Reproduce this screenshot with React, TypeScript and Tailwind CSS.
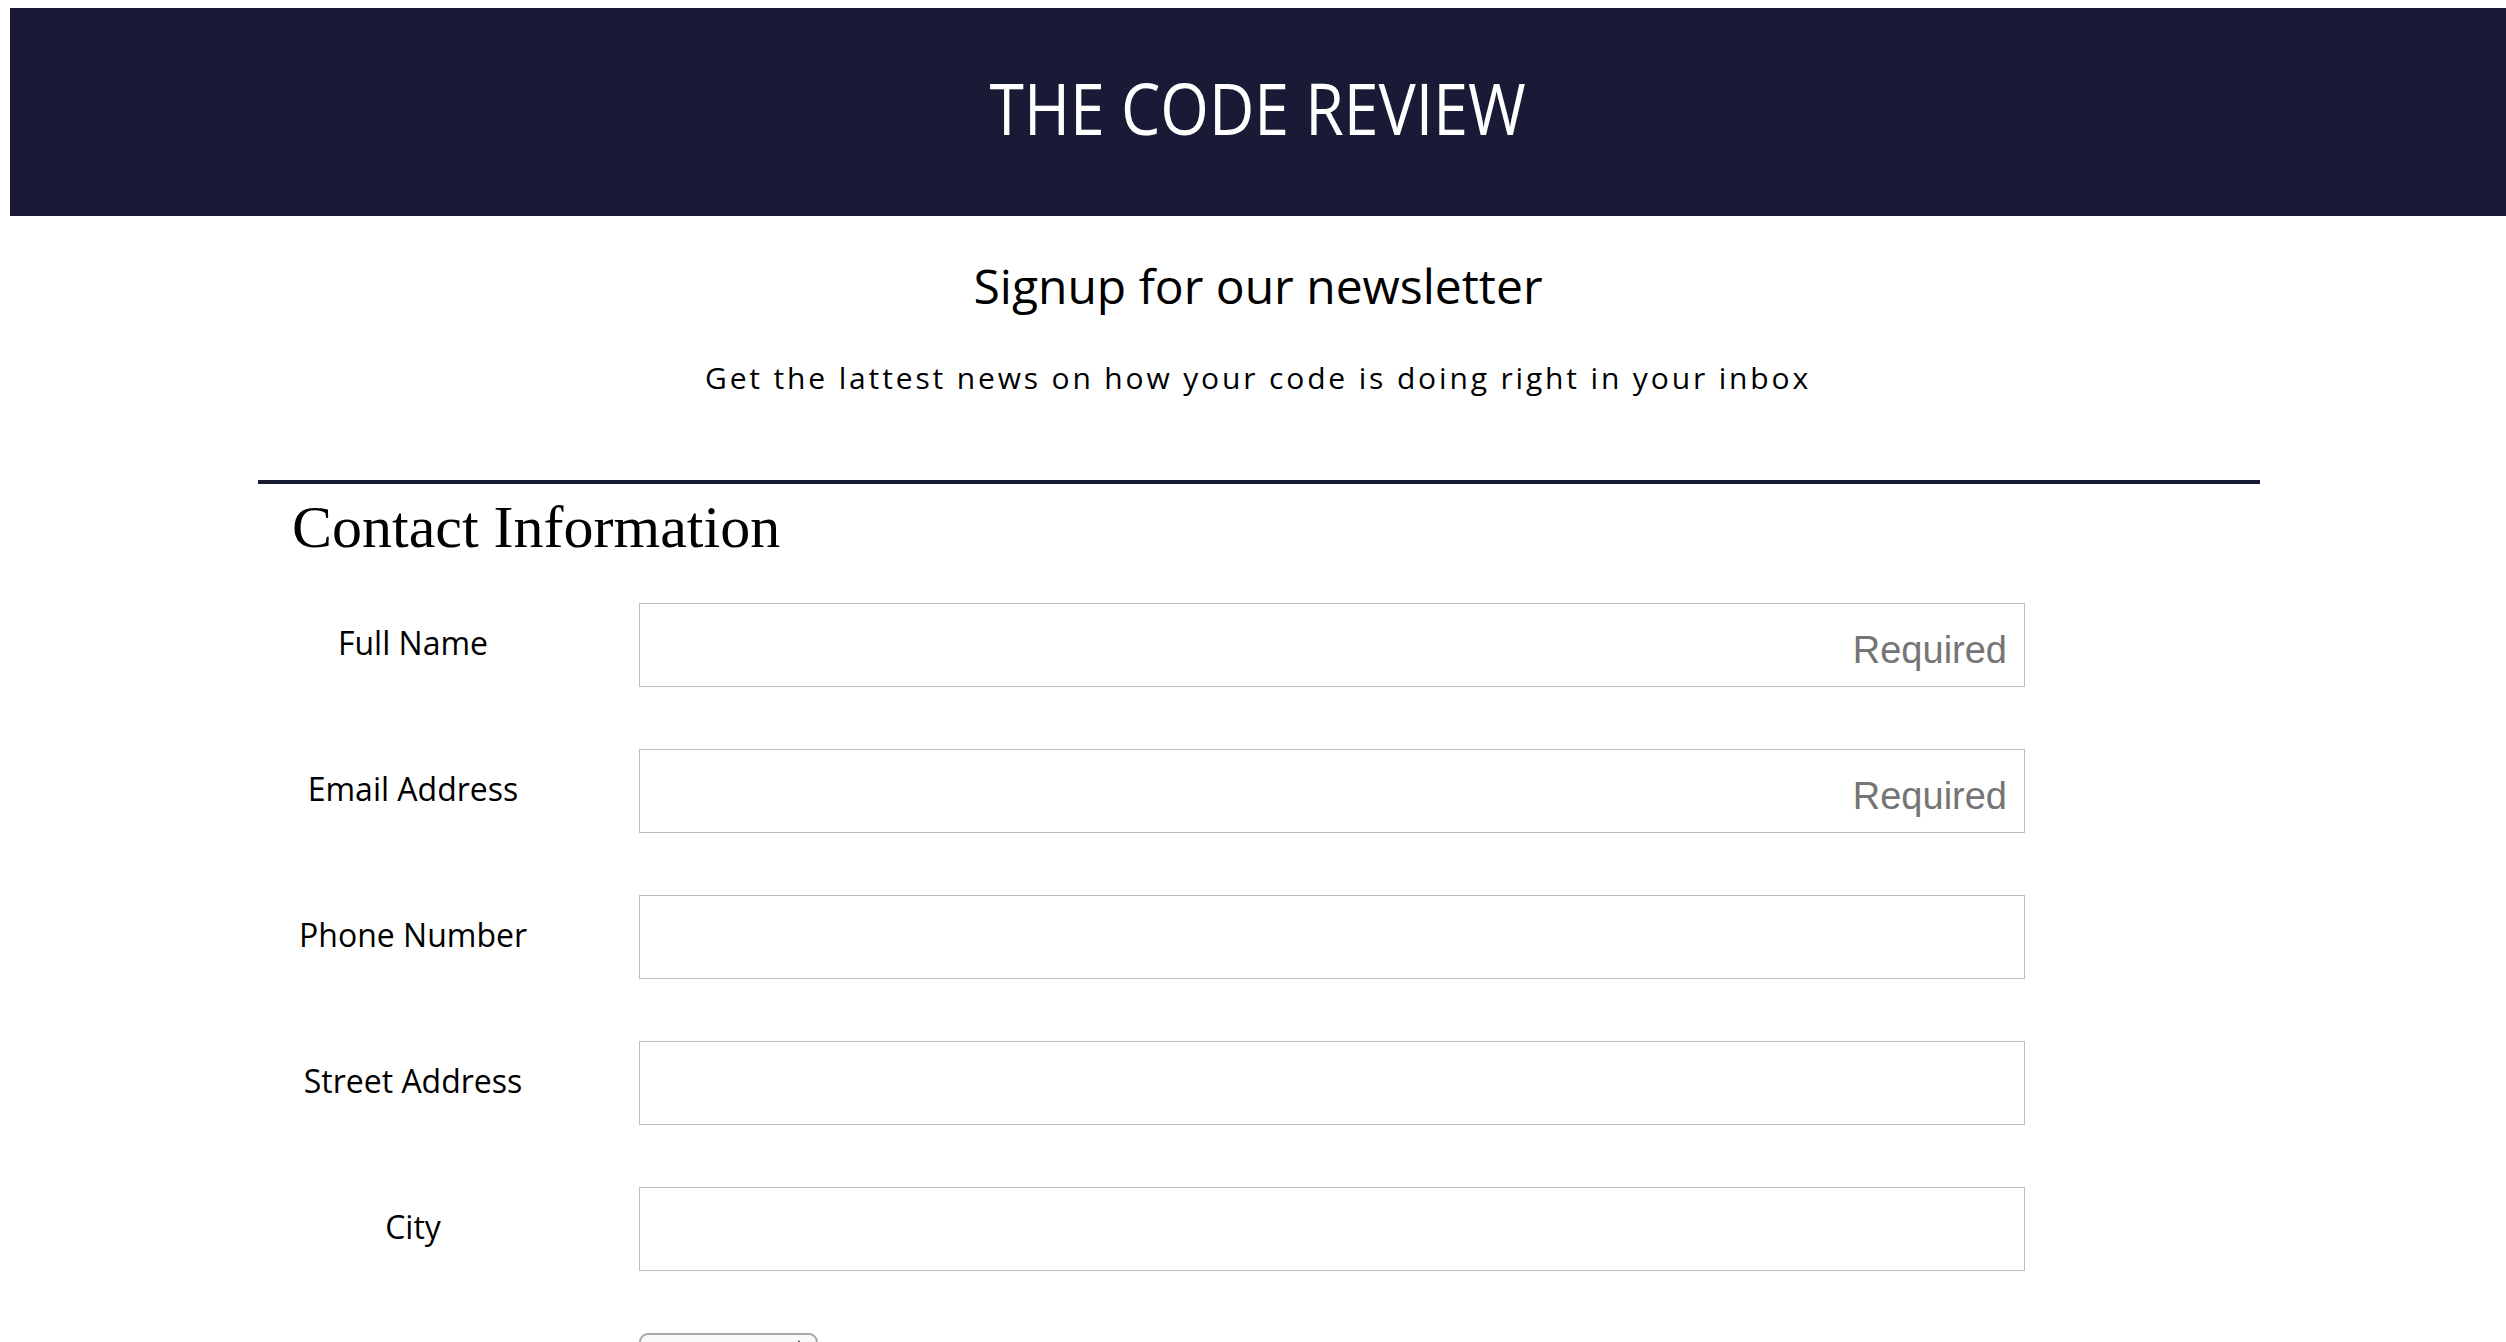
import React from "react";

const fields = [
  { label: "Full Name", required: true },
  { label: "Email Address", required: true },
  { label: "Phone Number", required: false },
  { label: "Street Address", required: false },
  { label: "City", required: false },
];

export default function App() {
  return (
    <div className="min-h-screen bg-white pt-[8px] pl-[10px] font-['Open_Sans',sans-serif] text-black">
      <header className="flex h-[208px] items-center justify-center bg-[#191a35]">
        <h1 className="-mt-[9px] inline-block origin-center scale-x-[0.88] text-[71px] leading-[71px] font-normal text-white">
          THE CODE REVIEW
        </h1>
      </header>

      <h2 className="mt-[46px] text-center text-[48px] leading-[48px] font-normal">
        Signup for our newsletter
      </h2>
      <p className="mt-[53px] text-center text-[30px] leading-[30px] tracking-[2.85px]">
        Get the lattest news on how your code is doing right in your inbox
      </p>

      <div className="mt-[87px] ml-[248px] h-[4px] w-[2002px] bg-[#191a35]" />

      <div className="ml-[248px] w-[2002px]">
        <h3 className="mt-[13px] pl-[34px] font-['Liberation_Serif',serif] text-[60px] leading-[60px] font-normal">
          Contact Information
        </h3>

        <div className="mt-[46px] flex flex-col gap-[62px]">
          {fields.map((f) => (
            <div key={f.label} className="flex items-center">
              <label className="w-[310px] -mt-[4px] text-center text-[32px] leading-[32px]">
                {f.label}
              </label>
              <input
                type="text"
                placeholder={f.required ? "Required" : ""}
                className="ml-[71px] box-border h-[84px] w-[1386px] border border-[#bdbdbd] bg-white pt-[10px] pr-[17px] text-right font-['Liberation_Sans',Arial,sans-serif] text-[38px] outline-none placeholder:text-[#757575]"
              />
            </div>
          ))}

          <div className="flex items-start">
            <div className="w-[310px]" />
            <div className="relative ml-[71px] box-border h-[60px] w-[179px] rounded-[9px] border-2 border-[#a8a8a8] bg-gradient-to-b from-[#fbfbfb] to-[#e6e6e6]">
              <svg
                className="absolute right-[12px] top-[5px]"
                width="10"
                height="30"
                viewBox="0 0 10 30"
                fill="none"
                stroke="#444"
                strokeWidth="2"
              >
                <path d="M1 9 L5 2 L9 9" />
                <path d="M1 21 L5 28 L9 21" />
              </svg>
            </div>
          </div>
        </div>
        <div className="h-[200px]" />
      </div>
    </div>
  );
}
